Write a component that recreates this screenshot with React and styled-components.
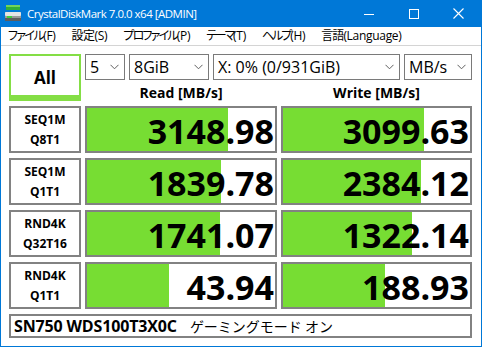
import React from "react";
import styled, { createGlobalStyle } from "styled-components";

const GlobalStyle = createGlobalStyle`
  html, body { margin: 0; padding: 0; background: #ffffff; }
  body { font-family: "Open Sans", "Noto Sans CJK JP", sans-serif; }
  * { box-sizing: border-box; }
`;

const GREEN = "#77dd33";
const BORDER = "#828282";

const Window = styled.div`
  width: 482px;
  height: 347px;
  border: 1px solid #0078d7;
  border-top: none;
  display: flex;
  flex-direction: column;
  background: #ffffff;
  overflow: hidden;
`;

const TitleBar = styled.div`
  height: 27px;
  flex: none;
  background: #0078d7;
  display: flex;
  align-items: center;
  padding-left: 3px;
  color: #ffffff;
`;

const TitleText = styled.span`
  font-family: "Open Sans", sans-serif;
  font-size: 11.5px;
  letter-spacing: -0.5px;
  margin-left: 4px;
  white-space: nowrap;
`;

const Controls = styled.div`
  margin-left: auto;
  display: flex;
  height: 100%;
`;

const CtrlButton = styled.div`
  width: 45px;
  height: 100%;
  display: flex;
  align-items: center;
  justify-content: center;
`;

const MenuBar = styled.div`
  height: 19px;
  flex: none;
  display: flex;
  align-items: center;
  gap: 16px;
  padding: 0 0 2px 7px;
  border-bottom: 1px solid #d4d4d4;
  font-family: "Open Sans", "Noto Sans CJK JP", sans-serif;
  font-size: 12px;
  color: #000;
  white-space: nowrap;
`;

const MenuItem = styled.span`
  line-height: 17px;
  letter-spacing: -0.3px;
`;

const MenuJp = styled.span`
  font-family: "Noto Sans CJK JP", sans-serif;
  font-feature-settings: "palt";
  letter-spacing: ${(p) => p.$ls}px;
`;

const Content = styled.div`
  flex: 1;
  padding: 8px 9px 0 8px;
  display: grid;
  grid-template-columns: 72px 192px 191px;
  grid-auto-rows: 47px;
  column-gap: 4px;
  row-gap: 5px;
  align-content: start;
`;

const AllButton = styled.div`
  border: 2px solid #84de45;
  border-bottom-width: 6px;
  background: #ffffff;
  display: flex;
  align-items: center;
  justify-content: center;
  padding-top: 3px;
  font-weight: 700;
  font-size: 17px;
  color: #000;
`;

const TopPanel = styled.div`
  grid-column: 2 / 4;
  display: grid;
  grid-template-columns: 192px 191px;
  grid-template-rows: 26px 21px;
  column-gap: 4px;
`;

const ComboRow = styled.div`
  grid-column: 1 / 3;
  display: flex;
  gap: 4px;
`;

const Combo = styled.div`
  width: ${(p) => p.$w}px;
  height: 26px;
  border: 1px solid #7a7a7a;
  background: #fff;
  display: flex;
  align-items: center;
  padding: 0 5px 0 4px;
  font-size: 16px;
  color: #000;
  white-space: nowrap;
  overflow: hidden;
`;

const ComboText = styled.span`
  flex: 1;
  line-height: 20px;
`;

const Header = styled.div`
  text-align: center;
  font-weight: 700;
  font-size: 14px;
  line-height: 18px;
  padding-top: 4px;
  color: #000;
`;

const Label = styled.div`
  border: 2px solid ${BORDER};
  display: flex;
  flex-direction: column;
  align-items: center;
  justify-content: center;
  font-weight: 700;
  font-size: 12px;
  line-height: 19.5px;
  color: #000;
`;

const Meter = styled.div`
  border: 2px solid ${BORDER};
  background: linear-gradient(
    to right,
    ${GREEN} 0,
    ${GREEN} ${(p) => p.$fill}px,
    #ffffff ${(p) => p.$fill}px
  );
  display: flex;
  align-items: center;
  justify-content: flex-end;
  padding: 3px 1px 0 0;
  font-weight: 700;
  font-size: 34px;
  line-height: 34px;
  color: #000;
`;

const Footer = styled.div`
  grid-column: 1 / -1;
  height: 24px;
  border: 2px solid ${BORDER};
  display: flex;
  align-items: center;
  padding-left: 3px;
  white-space: nowrap;
  color: #000;
`;

const DriveName = styled.span`
  font-weight: 700;
  font-size: 16px;
  line-height: 20px;
  letter-spacing: -0.15px;
`;

const DriveMode = styled.span`
  font-family: "Noto Sans CJK JP", sans-serif;
  font-size: 14px;
  line-height: 20px;
  margin-left: 13px;
`;

const Chevron = () => (
  <svg width="9" height="6" viewBox="0 0 9 6">
    <path d="M0.5 0.8 L4.5 4.8 L8.5 0.8" fill="none" stroke="#606060" strokeWidth="1" />
  </svg>
);

const AppIcon = () => (
  <svg width="19" height="19" viewBox="0 0 19 19">
    <rect x="2" y="1" width="14" height="5" fill="#2fae3a" />
    <rect x="2" y="1" width="14" height="2" fill="#72d35a" />
    <rect x="1" y="8" width="16" height="9" rx="1" fill="#9a9a9a" />
    <rect x="1" y="8" width="16" height="4" rx="1" fill="#e4e4e4" />
    <rect x="1" y="14" width="16" height="3" fill="#5d5d5d" />
    <rect x="3" y="12" width="5" height="2" fill="#3fcf3f" />
  </svg>
);

const rows = [
  { l1: "SEQ1M", l2: "Q8T1", r: "3148.98", rf: 141, w: "3099.63", wf: 141 },
  { l1: "SEQ1M", l2: "Q1T1", r: "1839.78", rf: 134, w: "2384.12", wf: 138 },
  { l1: "RND4K", l2: "Q32T16", r: "1741.07", rf: 133, w: "1322.14", wf: 129 },
  { l1: "RND4K", l2: "Q1T1", r: "43.94", rf: 82, w: "188.93", wf: 102 },
];

const menus = [
  { jp: "ファイル", en: "(F)", ls: -1.6 },
  { jp: "設定", en: "(S)", ls: -0.5 },
  { jp: "プロファイル", en: "(P)", ls: -1.8 },
  { jp: "テーマ", en: "(T)", ls: -2.2 },
  { jp: "ヘルプ", en: "(H)", ls: -2 },
  { jp: "言語", en: "(Language)", ls: -1 },
];

export default function App() {
  return (
    <>
      <GlobalStyle />
      <Window>
        <TitleBar>
          <AppIcon />
          <TitleText>CrystalDiskMark 7.0.0 x64 [ADMIN]</TitleText>
          <Controls>
            <CtrlButton>
              <svg width="10" height="10" viewBox="0 0 10 10">
                <path d="M0 5.5 H10" stroke="#fff" strokeWidth="1" />
              </svg>
            </CtrlButton>
            <CtrlButton>
              <svg width="10" height="10" viewBox="0 0 10 10">
                <rect x="0.5" y="0.5" width="9" height="9" fill="none" stroke="#fff" strokeWidth="1" />
              </svg>
            </CtrlButton>
            <CtrlButton>
              <svg width="11" height="11" viewBox="0 0 11 11">
                <path d="M0.5 0.5 L10.5 10.5 M10.5 0.5 L0.5 10.5" stroke="#fff" strokeWidth="1.1" />
              </svg>
            </CtrlButton>
          </Controls>
        </TitleBar>
        <MenuBar>
          {menus.map((m) => (
            <MenuItem key={m.jp}>
              <MenuJp $ls={m.ls}>{m.jp}</MenuJp>
              {m.en}
            </MenuItem>
          ))}
        </MenuBar>
        <Content>
          <AllButton>All</AllButton>
          <TopPanel>
            <ComboRow>
              <Combo $w={40}>
                <ComboText>5</ComboText>
                <Chevron />
              </Combo>
              <Combo $w={80}>
                <ComboText>8GiB</ComboText>
                <Chevron />
              </Combo>
              <Combo $w={187}>
                <ComboText>X: 0% (0/931GiB)</ComboText>
                <Chevron />
              </Combo>
              <Combo $w={68}>
                <ComboText>MB/s</ComboText>
                <Chevron />
              </Combo>
            </ComboRow>
            <Header>Read [MB/s]</Header>
            <Header>Write [MB/s]</Header>
          </TopPanel>
          {rows.map((r) => (
            <React.Fragment key={r.l1 + r.l2}>
              <Label>
                <span>{r.l1}</span>
                <span>{r.l2}</span>
              </Label>
              <Meter $fill={r.rf}>{r.r}</Meter>
              <Meter $fill={r.wf}>{r.w}</Meter>
            </React.Fragment>
          ))}
          <Footer>
            <DriveName>SN750 WDS100T3X0C</DriveName>
            <DriveMode>ゲーミングモード オン</DriveMode>
          </Footer>
        </Content>
      </Window>
    </>
  );
}
